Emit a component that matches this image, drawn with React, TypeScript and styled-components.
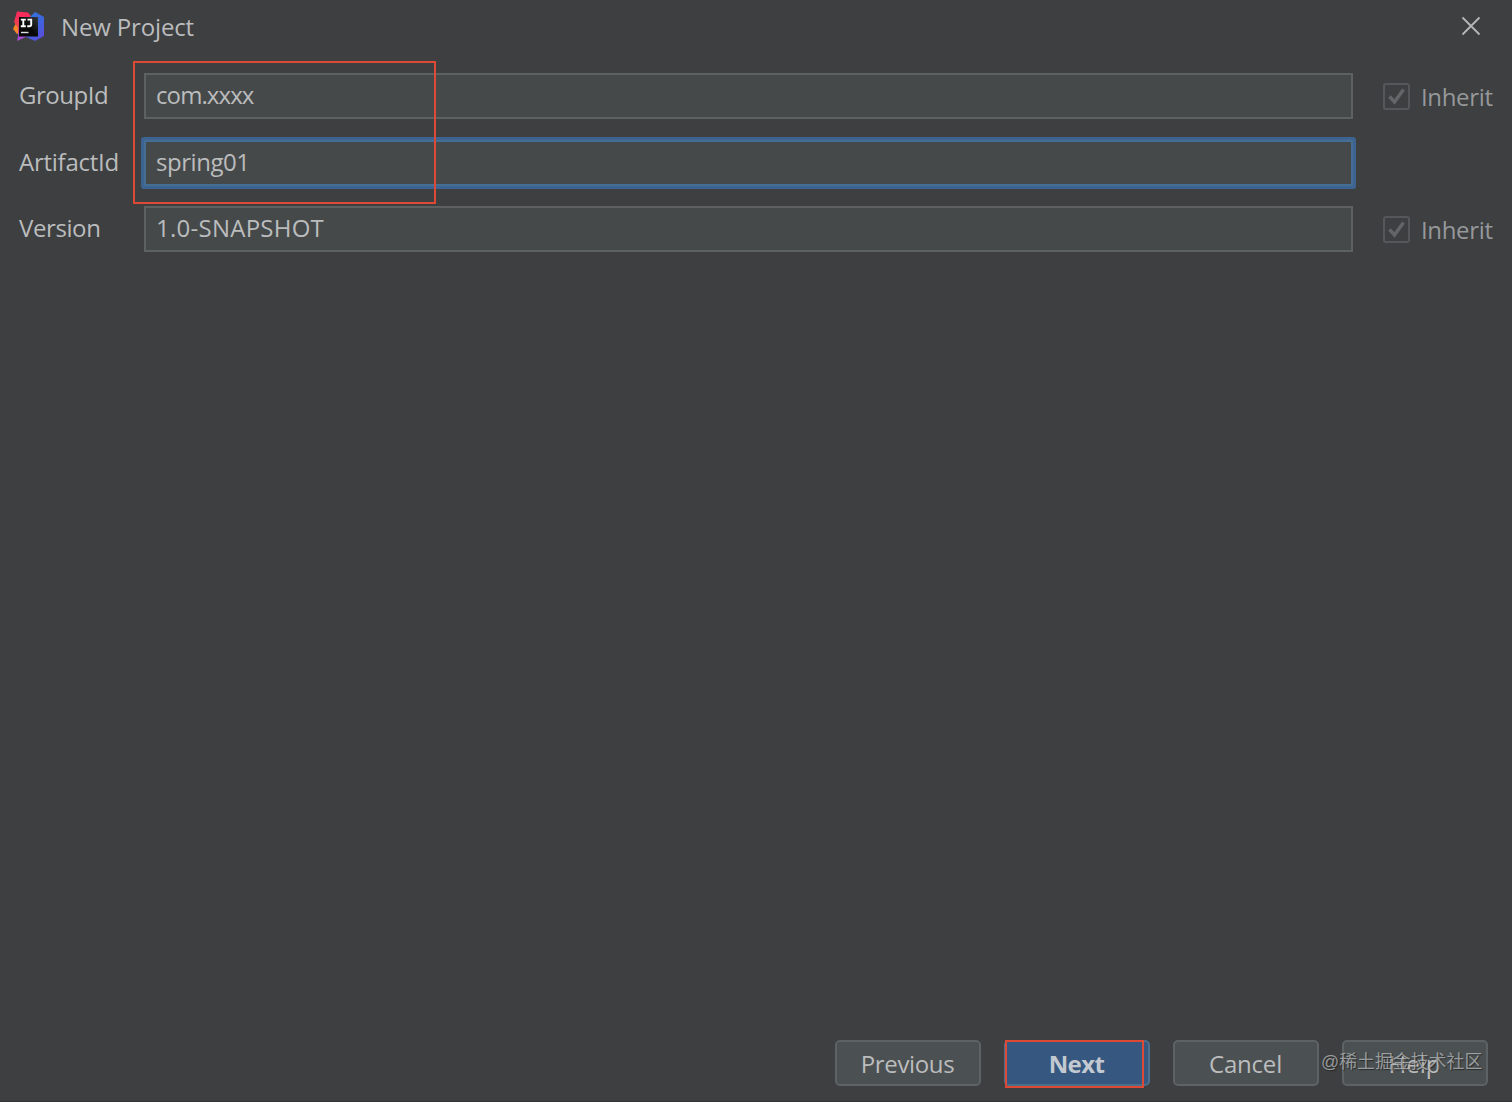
import React from "react";
import styled, { createGlobalStyle } from "styled-components";

const GlobalStyle = createGlobalStyle`
  * { box-sizing: border-box; }
  body { margin: 0; background: #3d3f41; }
`;

const Dialog = styled.div`
  position: relative;
  display: flex;
  flex-direction: column;
  width: 1512px;
  height: 1102px;
  overflow: hidden;
  background: #3d3f41;
  border-bottom: 1px solid #313335;
  color: #bbbcbd;
  font-family: "Open Sans", "Noto Sans", sans-serif;
  font-size: 24px;
  line-height: 32px;
  white-space: nowrap;
`;

const TitleBar = styled.header`
  display: flex;
  align-items: center;
  height: 54px;
  padding: 0 31px 0 13px;
`;

const Title = styled.h1`
  flex: 1;
  margin: 0 0 0 17px;
  font-size: 24px;
  font-weight: 400;
  letter-spacing: -0.15px;
`;

const CloseButton = styled.button`
  display: flex;
  padding: 0 0 2px;
  border: 0;
  background: none;
  color: #b5b7b8;
`;

const Form = styled.main`
  flex: 1;
  display: flex;
  flex-direction: column;
  gap: 20.5px;
  padding: 19px 19px 0;
`;

const Row = styled.div`
  display: grid;
  grid-template-columns: 125px 1209px auto;
  align-items: center;
  height: 46px;
`;

const Label = styled.label<{ $spacing: number }>`
  letter-spacing: ${(p) => p.$spacing}px;
  padding-bottom: 2px;
`;

const Field = styled.div<{ $focused?: boolean; $spacing: number }>`
  height: 46px;
  padding: 4px 10px;
  border: 2px solid ${(p) => (p.$focused ? "#466d94" : "#5e6162")};
  background: #45494a;
  box-shadow: ${(p) => (p.$focused ? "0 0 0 3px #3d6491" : "none")};
  border-radius: ${(p) => (p.$focused ? "1px" : "0")};
  letter-spacing: ${(p) => p.$spacing}px;
`;

const Inherit = styled.div`
  display: flex;
  align-items: center;
  gap: 11px;
  margin-left: 30px;
  color: #96989a;
  letter-spacing: -0.35px;
`;

const InheritLabel = styled.span`
  padding-top: 2px;
`;

const CheckBox = styled.span`
  display: grid;
  place-items: center;
  width: 27px;
  height: 27px;
  border: 2px solid #55585a;
  border-radius: 3px;
  color: #636668;
`;

const Footer = styled.footer`
  display: flex;
  justify-content: flex-end;
  gap: 23px;
  padding: 0 24px 15px 0;
`;

const Button = styled.button<{ $primary?: boolean; $spacing: number }>`
  width: 146px;
  height: 46px;
  padding: 2px 1px 0 0;
  border: 2px solid ${(p) => (p.$primary ? "#4c708c" : "#5d6264")};
  border-radius: 5px;
  background: ${(p) => (p.$primary ? "#365880" : "#4b5052")};
  color: ${(p) => (p.$primary ? "#c3c9d0" : "#bbbcbd")};
  font: inherit;
  font-weight: ${(p) => (p.$primary ? 700 : 400)};
  letter-spacing: ${(p) => p.$spacing}px;
`;

const Marker = styled.div<{ $x: number; $y: number; $w: number; $h: number }>`
  position: absolute;
  left: ${(p) => p.$x}px;
  top: ${(p) => p.$y}px;
  width: ${(p) => p.$w}px;
  height: ${(p) => p.$h}px;
  border: 2px solid #dc4a35;
  pointer-events: none;
`;

const Watermark = styled.div`
  position: absolute;
  left: 1321px;
  top: 1047px;
  color: rgba(190, 192, 193, 0.72);
  font-family: "Liberation Sans", "Noto Sans CJK SC", sans-serif;
  font-size: 17.9px;
  line-height: 30px;
  text-shadow: 1px 1px 1px rgba(25, 25, 25, 0.65);
`;

const Logo = () => (
  <svg width="31" height="33" viewBox="0 0 31 33">
    <defs>
      <linearGradient id="red" x1="0" y1="0" x2="0" y2="1">
        <stop offset="0.2" stopColor="#f72c5b" />
        <stop offset="0.6" stopColor="#e8474a" />
        <stop offset="1" stopColor="#a43cc4" />
      </linearGradient>
      <linearGradient id="blue" x1="0" y1="0" x2="0.6" y2="1">
        <stop offset="0" stopColor="#3277e0" />
        <stop offset="0.6" stopColor="#3d64dc" />
        <stop offset="1" stopColor="#5750db" />
      </linearGradient>
      <linearGradient id="black" x1="1" y1="0" x2="0" y2="1">
        <stop offset="0" stopColor="#34383a" />
        <stop offset="0.5" stopColor="#080808" />
      </linearGradient>
    </defs>
    <path d="M3 12 0 18l4 5 7-2V12z" fill="#f58529" />
    <path d="M4 0.5 15 1.5l4 5-8 17-6 1V17l-4-6z" fill="url(#red)" />
    <path d="m17 6 5-5 9 5v19l-9 5-9-4z" fill="url(#blue)" />
    <path d="M6 21 4 30l11-5z" fill="#a64bd4" />
    <path d="M6 6h19v19.5H6z" fill="url(#black)" />
    <path d="M7.8 8.6h5M10.3 8.6v6.4M7.8 15.2h5M14.5 8.6h3.7v4.8q0 1.8-2 1.8h-2" fill="none" stroke="#fff" strokeWidth="1.9" />
    <path d="M8 21.5h7.5" stroke="#ddd" strokeWidth="1.4" />
  </svg>
);

const InheritOption = () => (
  <Inherit>
    <CheckBox>
      <svg width="19" height="19" viewBox="0 0 19 19">
        <path d="m2.5 9.5 5 5.5L16.5 2.5" fill="none" stroke="currentColor" strokeWidth="3.4" />
      </svg>
    </CheckBox>
    <InheritLabel>Inherit</InheritLabel>
  </Inherit>
);

export default function App() {
  return (
    <Dialog>
      <GlobalStyle />
      <TitleBar>
        <Logo />
        <Title>New Project</Title>
        <CloseButton aria-label="Close">
          <svg width="20" height="20" viewBox="0 0 20 20">
            <path d="m1.5 1.5 17 17m0-17-17 17" stroke="currentColor" strokeWidth="1.8" />
          </svg>
        </CloseButton>
      </TitleBar>
      <Form>
        <Row>
          <Label $spacing={-0.45}>GroupId</Label>
          <Field $spacing={-0.9}>com.xxxx</Field>
          <InheritOption />
        </Row>
        <Row>
          <Label $spacing={-0.25}>ArtifactId</Label>
          <Field $focused $spacing={-0.45}>spring01</Field>
        </Row>
        <Row>
          <Label $spacing={-0.4}>Version</Label>
          <Field $spacing={0.25}>1.0-SNAPSHOT</Field>
          <InheritOption />
        </Row>
      </Form>
      <Footer>
        <Button $spacing={-0.35}>Previous</Button>
        <Button $primary $spacing={-0.6}>Next</Button>
        <Button $spacing={-0.2}>Cancel</Button>
        <Button $spacing={0}>Help</Button>
      </Footer>
      <Marker $x={133} $y={61} $w={303} $h={143} />
      <Marker $x={1005} $y={1040} $w={139} $h={48} />
      <Watermark>@稀土掘金技术社区</Watermark>
    </Dialog>
  );
}
